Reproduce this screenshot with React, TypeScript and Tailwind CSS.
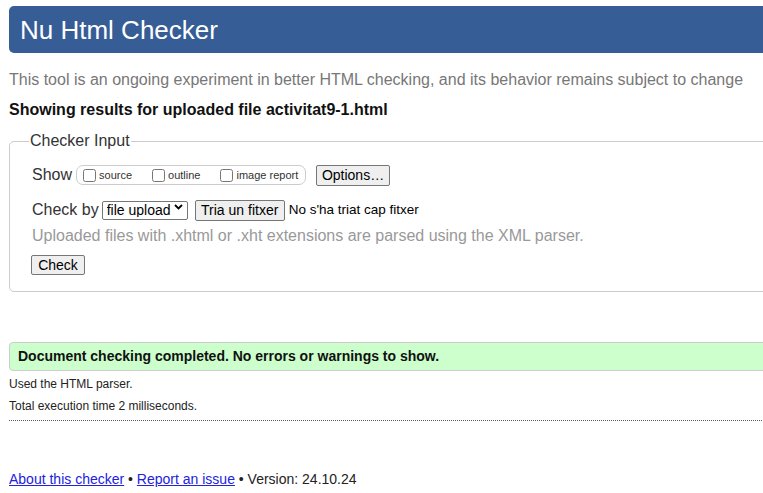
export default function App() {
  return (
    <div className="w-[763px] h-[493px] overflow-hidden bg-white font-['Liberation_Sans',Arial,sans-serif]">
      <div className="w-[800px] pl-[9px] pt-[6px]">
        {/* header */}
        <div className="h-[47px] rounded-l-[5px] bg-[#365d96] flex items-center pl-[11px]">
          <h1 className="text-[26px] text-white leading-none">Nu Html Checker</h1>
        </div>

        <p className="mt-[17px] text-[16px] leading-[20px] text-[#777]">
          This tool is an ongoing experiment in better HTML checking, and its behavior remains subject to change
        </p>
        <p className="mt-[10px] text-[16px] leading-[20px] font-bold text-[#111]">
          Showing results for uploaded file activitat9-1.html
        </p>

        {/* checker input */}
        <fieldset className="mt-[11px] w-[770px] border border-[#ccc] rounded-[5px] px-[19px] pb-[14px]">
          <legend className="px-px text-[16px] leading-[20px] text-[#333]">Checker Input</legend>

          <div className="pl-[3px] mt-[13px] flex items-center h-[22px]">
            <span className="text-[16px] text-[#333]">Show</span>
            <div className="ml-[4px] h-[20px] w-[230px] border border-[#ccc] rounded-[7px] flex items-center pl-[6px] text-[11px] text-[#333]">
              <label className="flex items-center">
                <input type="checkbox" className="m-0 w-[13px] h-[13px]" />
                <span className="ml-[3px]">source</span>
              </label>
              <label className="flex items-center ml-[20px]">
                <input type="checkbox" className="m-0 w-[13px] h-[13px]" />
                <span className="ml-[3px]">outline</span>
              </label>
              <label className="flex items-center ml-[20px]">
                <input type="checkbox" className="m-0 w-[13px] h-[13px]" />
                <span className="ml-[3px]">image report</span>
              </label>
            </div>
            <button className="ml-[10px] h-[21px] w-[74px] border border-[#767676] rounded-[2px] bg-[#efefef] text-[14px] leading-none text-black">
              Options…
            </button>
          </div>

          <div className="pl-[3px] mt-[13px] flex items-center h-[22px]">
            <span className="text-[16px] text-[#333]">Check by</span>
            <div className="relative ml-[3px]">
              <select className="appearance-none h-[19px] w-[86px] border border-[#767676] rounded-[2px] bg-white text-[14px] leading-none text-black pl-[4px]">
                <option>file upload</option>
              </select>
              <svg className="absolute right-[5px] top-[6px] pointer-events-none" width="9" height="6" viewBox="0 0 9 6">
                <path d="M1 1l3.5 3.5L8 1" stroke="#000" strokeWidth="1.8" fill="none" />
              </svg>
            </div>
            <button className="ml-[7px] h-[21px] w-[90px] border border-[#767676] rounded-[2px] bg-[#efefef] text-[14px] leading-none text-black">
              Tria un fitxer
            </button>
            <span className="ml-[4px] text-[13.5px] text-black">No s'ha triat cap fitxer</span>
          </div>

          <p className="pl-[3px] mt-[5px] text-[16px] leading-[20px] text-[#999]">
            Uploaded files with .xhtml or .xht extensions are parsed using the XML parser.
          </p>

          <div className="pl-[2px] mt-[7px]">
            <button className="h-[20px] w-[54px] border border-[#767676] rounded-[2px] bg-[#efefef] text-[14px] leading-none text-black">
              Check
            </button>
          </div>
        </fieldset>

        {/* result */}
        <div className="mt-[50px] h-[29px] border border-[#ccc] rounded-l-[4px] bg-[#ccffcc] flex items-center pl-[8px]">
          <p className="text-[14px] font-bold text-[#111]">Document checking completed. No errors or warnings to show.</p>
        </div>
        <p className="mt-[6px] text-[12px] leading-[14px] text-[#222]">Used the HTML parser.</p>
        <p className="mt-[8px] text-[12px] leading-[14px] text-[#222]">Total execution time 2 milliseconds.</p>
        <div className="mt-[7px] border-t border-dotted border-[#555]" />

        {/* footer */}
        <p className="mt-[50px] text-[14px] leading-[16px] text-[#222]">
          <a href="#" className="underline text-[#2222dd]">About this checker</a>
          {" • "}
          <a href="#" className="underline text-[#2222dd]">Report an issue</a>
          {" • Version: 24.10.24"}
        </p>
      </div>
    </div>
  );
}
